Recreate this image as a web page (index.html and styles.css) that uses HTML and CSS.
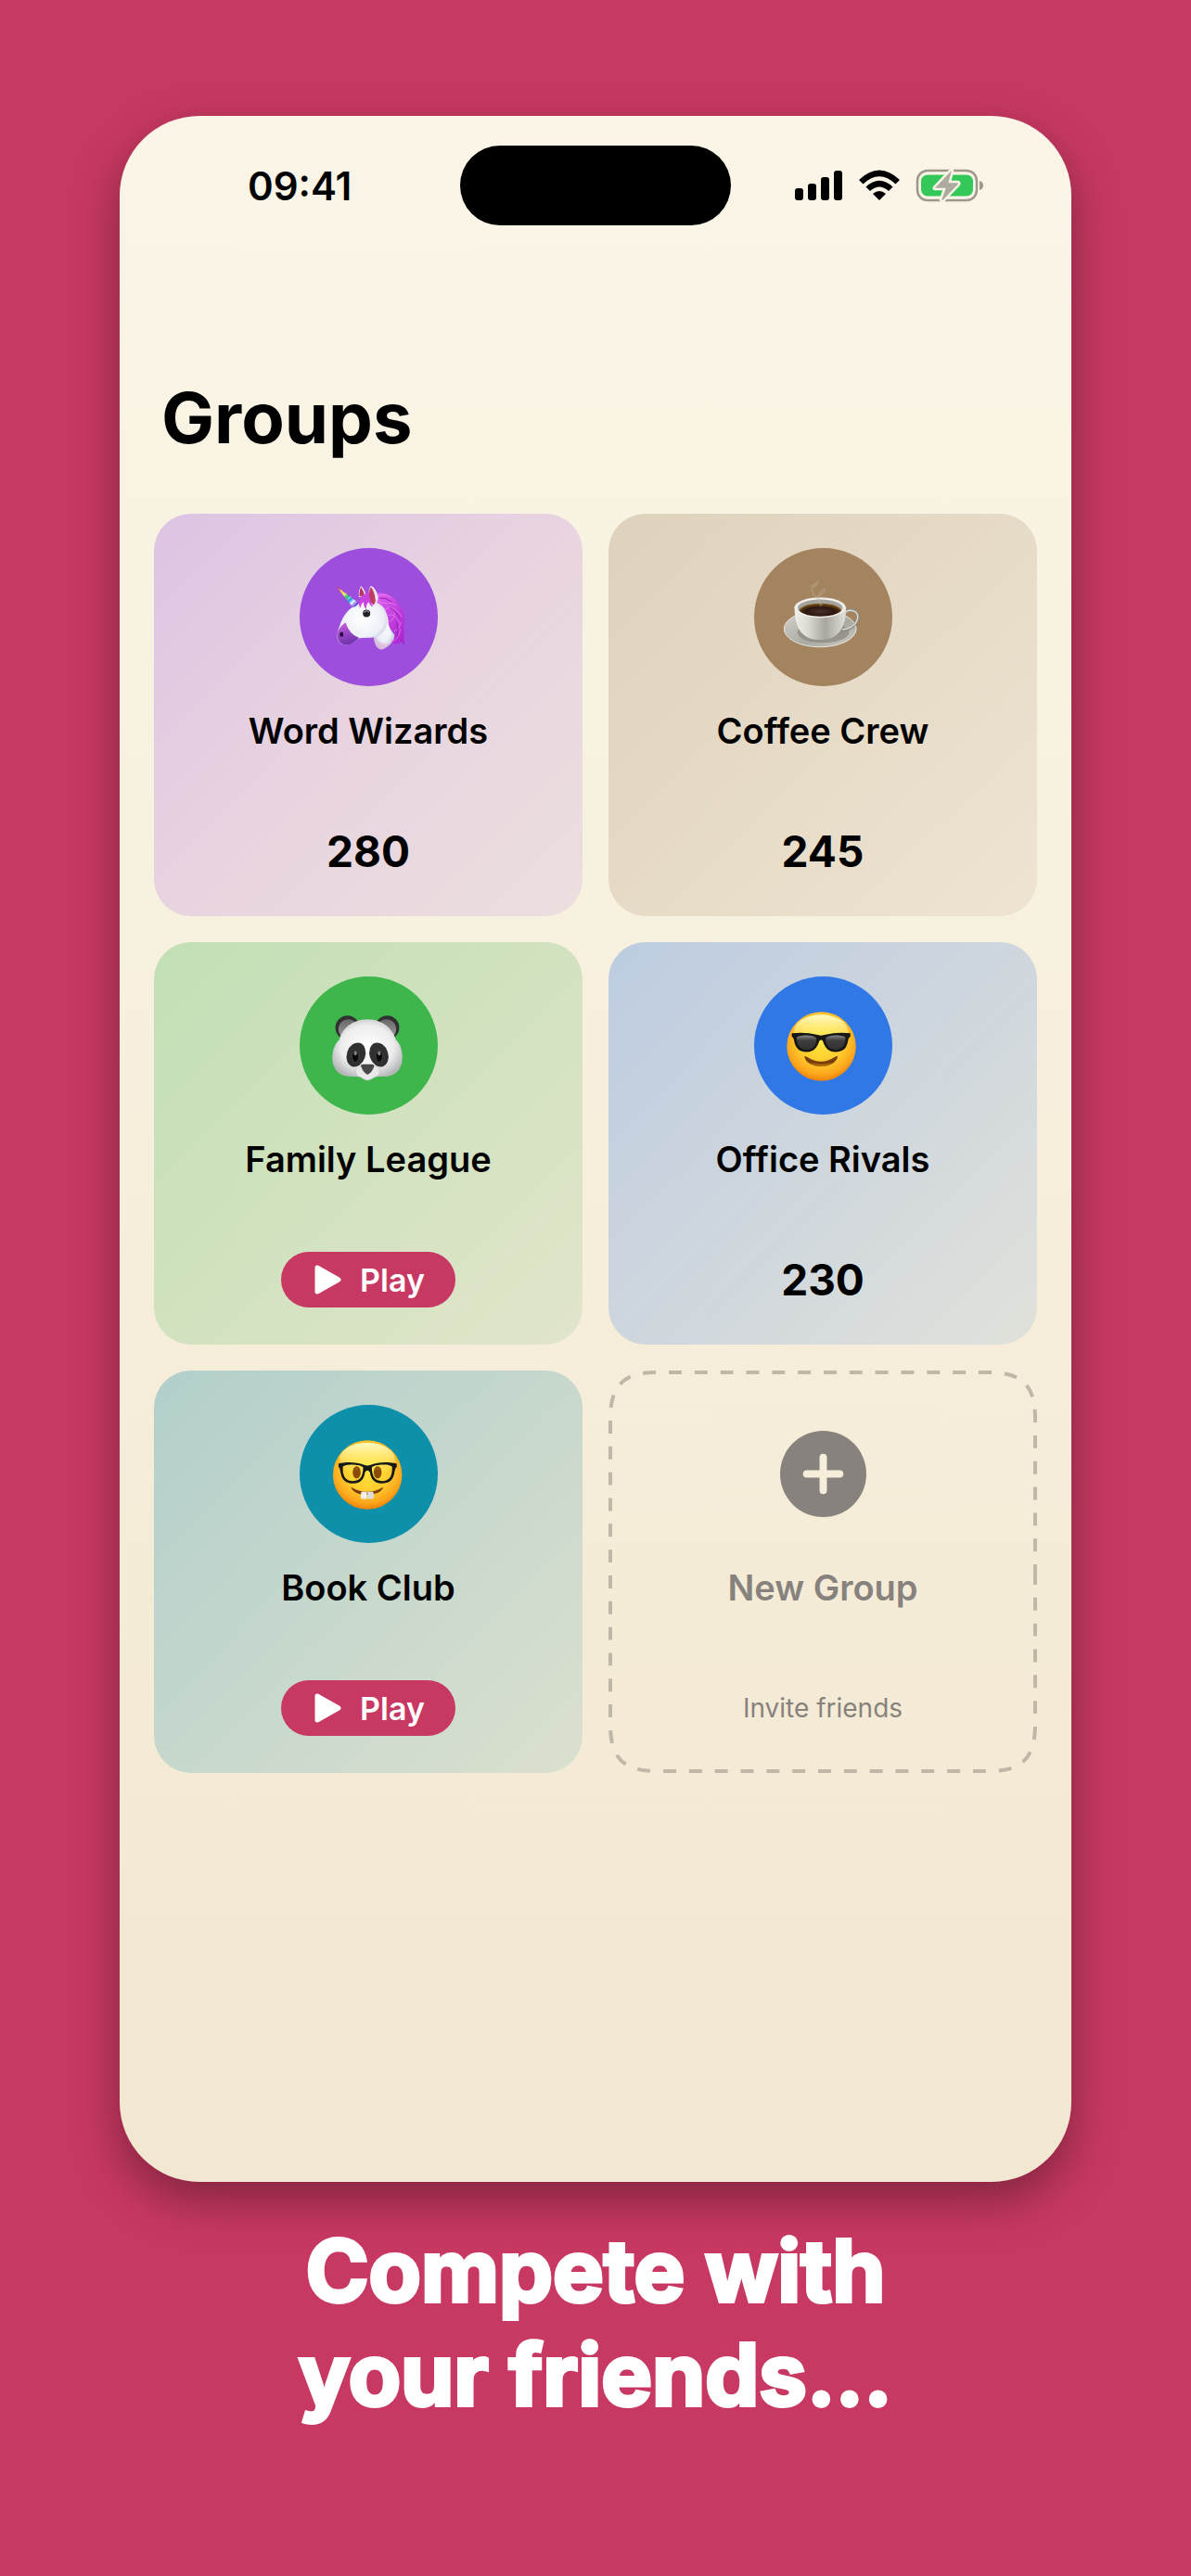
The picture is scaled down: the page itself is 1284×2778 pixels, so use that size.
FILE: index.html
```html
<!DOCTYPE html>
<html lang="en">
<head>
  <meta charset="UTF-8">
  <meta name="viewport" content="width=device-width, initial-scale=1.0">
  <title>Groups</title>
  <link rel="stylesheet" href="styles.css">
</head>
<body>
  <main class="phone">
    <div class="status-bar">
      <span class="time">09:41</span>
      <span class="island"></span>
      <div class="status-icons">
        <svg width="52" height="34" viewBox="0 0 52 34">
          <rect x="0" y="20" width="9" height="13" rx="3"/>
          <rect x="14" y="15" width="9" height="18" rx="3"/>
          <rect x="28" y="8" width="9" height="25" rx="3"/>
          <rect x="42" y="1" width="9" height="32" rx="3"/>
        </svg>
        <svg width="46" height="34" viewBox="0 0 46 34">
          <path d="M1 11 Q23 -10 45 11 L40.500 15.500 Q23 -1 5.500 15.500 Z"/>
          <path d="M8.500 18.500 Q23 5 37.500 18.500 L33 23 Q23 14 13 23 Z"/>
          <path d="M16 26 Q23 20 30 26 L23 33 Z"/>
        </svg>
        <svg width="74" height="36" viewBox="0 0 74 36">
          <rect x="2" y="2" width="64" height="32" rx="11" fill="none" stroke="#9d988c" stroke-width="2.500"/>
          <rect x="6" y="6.500" width="56" height="23" rx="7" fill="#34c759"/>
          <path d="M69 13 Q73 14 73 18 Q73 22 69 23 Z" fill="#9d988c"/>
          <path d="M38 1 L20 20 Q19 22 22 22 H31 L27 33 Q28 37 31 34 L47 17 Q48 14 45 14 H37 L40 3 Q40 0 38 1 Z" fill="#aeaa9f" stroke="#faf5e7" stroke-width="2.500"/>
        </svg>
      </div>
    </div>

    <h1 class="title">Groups</h1>

    <section class="groups">
      <article class="card purple">
        <div class="badge">
          <svg viewBox="38 32 448 448">
            <defs>
              <linearGradient id="horn" x1="160" y1="158" x2="222" y2="220" gradientUnits="userSpaceOnUse">
                <stop offset="0" stop-color="#e8282c"/>
                <stop offset=".2" stop-color="#ffb629"/>
                <stop offset=".35" stop-color="#f3f04a"/>
                <stop offset=".5" stop-color="#3ecf63"/>
                <stop offset=".68" stop-color="#2b9cf0"/>
                <stop offset=".8" stop-color="#d8efff"/>
                <stop offset="1" stop-color="#5a23cf"/>
              </linearGradient>
              <radialGradient id="horse" cx=".5" cy=".4" r=".65">
                <stop offset="0" stop-color="#ffffff"/>
                <stop offset=".65" stop-color="#eef0f8"/>
                <stop offset="1" stop-color="#b4b3d6"/>
              </radialGradient>
              <linearGradient id="mane" x1="0" y1="0" x2="1" y2="1">
                <stop offset="0" stop-color="#e067f2"/>
                <stop offset="1" stop-color="#aa1fce"/>
              </linearGradient>
              <linearGradient id="muzzle" x1="0" y1="0" x2=".3" y2="1">
                <stop offset="0" stop-color="#cf62e4"/>
                <stop offset="1" stop-color="#7233ae"/>
              </linearGradient>
            </defs>
            <path d="M230 191 Q228 166 237 155 Q249 164 254 188 Z" fill="#f1e5ef"/>
            <path d="M232 188 Q231 168 237 159 Q246 172 249 187 Z" fill="#b83567"/>
            <path d="M278 184 C308 168 345 186 358 214 C377 230 379 258 376 278 C379 303 373 323 379 345 Q371 342 369 335 Q352 350 329 336 C342 332 348 319 345 303 C329 294 321 270 320 250 L286 210 Z" fill="url(#mane)"/>
            <path d="M285 210 Q326 230 326 278 Q331 300 346 314 C345 332 333 347 316 356 C298 367 283 360 277 320 Z" fill="url(#horse)"/>
            <path d="M278 320 Q300 350 333 341 Q318 359 301 362 Q284 358 278 320 Z" fill="#e9b4d8" opacity=".55"/>
            <path d="M228 214 C264 196 300 205 315 232 C329 267 322 300 294 318 C271 326 249 322 231 325 C213 338 195 349 178 345 C160 339 157 320 161 304 C173 269 184 232 228 214 Z" fill="url(#horse)"/>
            <path d="M187 273 Q198 310 231 324 Q214 340 200 344 C177 350 158 338 161 306 Q167 287 187 273 Z" fill="url(#muzzle)"/>
            <ellipse cx="174" cy="312" rx="6" ry="8" fill="#250c40"/>
            <path d="M157 157 L229 210 Q221 224 210 224 Z" fill="url(#horn)"/>
            <path d="M171 172 l5 -3 M182 185 l8 -6 M193 199 l12 -9 M203 212 l16 -10" stroke="#fff" stroke-width="3" opacity=".65"/>
            <path d="M263 204 Q259 165 269 154 Q286 163 293 190 Q293 208 281 218 Z" fill="#eee3ee"/>
            <path d="M265 206 Q260 168 269 158 Q281 172 284 202 Q282 215 277 216 Z" fill="#bd3c63"/>
            <path d="M264 178 C236 178 224 204 234 227 Q239 211 246 206 Q244 222 254 231 Q253 214 262 207 Q266 220 277 222 Q263 204 264 178 Z" fill="#c844dd"/>
            <path d="M290 188 Q311 177 335 192 M292 204 C312 219 328 202 350 217 M316 230 C333 218 356 232 370 256 M323 251 Q346 238 363 278 M322 274 C336 271 346 260 344 241 M344 302 Q363 294 367 272 M332 335 C354 333 363 314 364 294" fill="none" stroke="#ed82f7" stroke-width="2"/>
            <path d="M296 194 Q318 192 338 207 M330 225 Q355 238 363 262 M352 270 Q360 295 353 319" fill="none" stroke="#9225b5" stroke-width="3"/>
            <circle cx="255" cy="244" r="12" fill="#222126"/>
            <path d="M247 241 Q255 232 263 240" fill="none" stroke="#8a8a8f" stroke-width="4"/>
          </svg>
        </div>
        <h2 class="name">Word Wizards</h2>
        <div class="footer"><span class="score">280</span></div>
      </article>

      <article class="card brown">
        <div class="badge">
          <svg viewBox="38 32 448 448">
            <defs>
              <linearGradient id="saucer" x1="0" y1="0" x2="1" y2="1">
                <stop offset="0" stop-color="#d6d5cd"/>
                <stop offset=".6" stop-color="#aaa9a1"/>
                <stop offset="1" stop-color="#d0cfc8"/>
              </linearGradient>
              <linearGradient id="cup" x1="0" y1="0" x2="1" y2="0">
                <stop offset="0" stop-color="#f0efea"/>
                <stop offset=".25" stop-color="#dcdbd3"/>
                <stop offset=".6" stop-color="#a9a69e"/>
                <stop offset="1" stop-color="#e1e0d9"/>
              </linearGradient>
              <radialGradient id="coffee" cx=".5" cy=".6" r=".5">
                <stop offset="0" stop-color="#4b3028"/>
                <stop offset=".7" stop-color="#2b1610"/>
                <stop offset="1" stop-color="#5b3814"/>
              </radialGradient>
            </defs>
            <ellipse cx="252" cy="294" rx="117" ry="59" fill="url(#saucer)" stroke="#e4e3dd" stroke-width="3"/>
            <ellipse cx="262" cy="306" rx="84" ry="33" fill="#77746d" opacity=".5"/>
            <path d="M331 246 C333 230 373 226 374 254 C374 282 344 301 321 299" fill="none" stroke="#8e8e89" stroke-width="9"/>
            <path d="M333 242 C342 229 375 232 374 257 C371 282 344 296 324 296" fill="none" stroke="#dddcd6" stroke-width="4"/>
            <path d="M169 222 C169 285 188 330 252 330 C316 330 337 283 336 222 Z" fill="url(#cup)"/>
            <ellipse cx="252" cy="225" rx="83" ry="33" fill="#efeee9"/>
            <ellipse cx="252" cy="226" rx="73" ry="27" fill="#a5a39b"/>
            <path d="M184 236 C194 207 309 206 321 236 Q302 254 252 254 Q203 254 184 236 Z" fill="url(#coffee)"/>
            <path d="M187 231 C210 208 294 207 318 231" fill="none" stroke="#755018" stroke-width="4"/>
            <path d="M253 220 C253 195 223 186 225 166 C228 153 243 157 243 145 M222 155 Q236 150 247 141 M258 216 C242 199 246 168 269 166 M238 190 Q257 186 267 172" fill="none" stroke="#c3b5a6" stroke-width="5" stroke-linecap="round" opacity=".35"/>
          </svg>
        </div>
        <h2 class="name">Coffee Crew</h2>
        <div class="footer"><span class="score">245</span></div>
      </article>

      <article class="card green">
        <div class="badge">
          <svg viewBox="38 39 448 448">
            <defs>
              <radialGradient id="panda" cx=".5" cy=".48" r=".58">
                <stop offset="0" stop-color="#ffffff"/>
                <stop offset=".65" stop-color="#ededee"/>
                <stop offset="1" stop-color="#b4b5b7"/>
              </radialGradient>
              <linearGradient id="ear" x1="0" y1="0" x2="0" y2="1">
                <stop offset="0" stop-color="#686868"/>
                <stop offset="1" stop-color="#a09f9f"/>
              </linearGradient>
            </defs>
            <circle cx="193" cy="205" r="39" fill="#313132"/>
            <circle cx="196" cy="210" r="32" fill="url(#ear)"/>
            <circle cx="322" cy="205" r="39" fill="#313132"/>
            <circle cx="319" cy="210" r="32" fill="url(#ear)"/>
            <path d="M258 178 C309 178 341 211 350 244 C366 259 371 282 371 304 C370 345 345 364 307 364 H209 C170 364 145 345 144 305 C144 282 150 260 167 244 C174 211 207 178 258 178 Z" fill="url(#panda)"/>
            <path d="M231 331 C216 335 216 356 230 364 C240 366 246 375 258 376 C270 375 277 366 287 364 C302 355 301 334 285 330 Z" fill="#e9e9ea" stroke="#c0c0c2" stroke-width="2"/>
            <ellipse cx="221" cy="293" rx="30" ry="40" transform="rotate(18 221 293)" fill="#303031"/>
            <ellipse cx="295" cy="293" rx="30" ry="40" transform="rotate(-18 295 293)" fill="#303031"/>
            <ellipse cx="219" cy="298" rx="11" ry="19" fill="#0a0a0b" stroke="#505052" stroke-width="2"/>
            <ellipse cx="296" cy="298" rx="11" ry="19" fill="#0a0a0b" stroke="#505052" stroke-width="2"/>
            <ellipse cx="219" cy="288" rx="5" ry="7" fill="#858588"/>
            <ellipse cx="296" cy="288" rx="5" ry="7" fill="#858588"/>
            <path d="M237 330 Q235 323 246 324 H270 Q282 323 279 332 Q273 350 258 358 Q243 350 237 330 Z" fill="#48484a"/>
          </svg>
        </div>
        <h2 class="name">Family League</h2>
        <div class="footer">
          <button class="play">
            <svg width="29" height="32" viewBox="0 0 29 32"><path d="M3 3 V29 L26 16 Z"/></svg>
            Play
          </button>
        </div>
      </article>

      <article class="card blue">
        <div class="badge">
          <svg viewBox="38 39 448 448">
            <defs>
              <radialGradient id="face" cx=".5" cy=".4" r=".6">
                <stop offset="0" stop-color="#ffe83f"/>
                <stop offset=".55" stop-color="#ffcd2e"/>
                <stop offset=".85" stop-color="#fba61c"/>
                <stop offset="1" stop-color="#ed8208"/>
              </radialGradient>
              <linearGradient id="shine" x1="0" y1="0" x2="0" y2="1">
                <stop offset="0" stop-color="#fffbc8"/>
                <stop offset="1" stop-color="#ffed55" stop-opacity="0"/>
              </linearGradient>
              <linearGradient id="lens" x1="0" y1="0" x2="0" y2="1">
                <stop offset="0" stop-color="#858585"/>
                <stop offset=".35" stop-color="#3e3e3e"/>
                <stop offset="1" stop-color="#303030"/>
              </linearGradient>
            </defs>
            <circle cx="256" cy="266" r="112" fill="url(#face)"/>
            <ellipse cx="255" cy="218" rx="88" ry="55" fill="url(#shine)"/>
            <path d="M160 223 Q205 218 240 228 Q255 233 270 228 Q306 218 350 223 V233 Q344 238 342 249 C338 276 322 284 302 284 C277 284 267 269 261 249 Q255 241 249 249 C243 269 233 284 208 284 C187 284 172 274 168 249 Q166 238 160 233 Z" fill="#161617"/>
            <path d="M176 238 C177 228 233 226 240 240 C241 260 229 277 210 277 C188 277 176 263 176 238 Z" fill="url(#lens)"/>
            <path d="M334 238 C333 228 277 226 270 240 C269 260 281 277 302 277 C322 277 334 263 334 238 Z" fill="url(#lens)"/>
            <path d="M201 298 Q203 296 209 300 Q255 330 300 300 Q306 296 309 298 C303 340 207 341 201 298 Z" fill="#79400b"/>
            <path d="M216 318 Q255 340 294 318 Q255 331 216 318 Z" fill="#c8740d"/>
          </svg>
        </div>
        <h2 class="name">Office Rivals</h2>
        <div class="footer"><span class="score">230</span></div>
      </article>

      <article class="card teal">
        <div class="badge">
          <svg viewBox="38 45 448 448">
            <circle cx="258" cy="272" r="112" fill="url(#face)"/>
            <ellipse cx="257" cy="222" rx="90" ry="54" fill="url(#shine)"/>
            <ellipse cx="223" cy="264" rx="13" ry="20" fill="#8b4c08"/>
            <ellipse cx="291" cy="264" rx="13" ry="20" fill="#8b4c08"/>
            <path d="M219 254 q4 -7 8 0 M287 254 q4 -7 8 0" fill="none" stroke="#bd7622" stroke-width="3"/>
            <path d="M204 311 C235 332 280 332 309 311 C302 344 214 347 204 311 Z" fill="#7a3e0a"/>
            <path d="M238 327 H256 V350 H242 Q235 350 236 342 Z" fill="#f1f0ed"/>
            <path d="M258 327 H277 L279 342 Q279 350 272 350 H258 Z" fill="#dddcda"/>
            <path fill-rule="evenodd" d="M164 236 C187 229 222 230 247 240 Q258 244 269 240 C295 229 330 230 353 236 V246 Q348 250 346 261 C342 291 328 300 304 300 C282 300 269 287 266 264 Q258 252 250 264 C247 287 235 300 212 300 C188 300 174 289 170 260 Q169 249 164 246 Z M178 247 C177 277 187 292 211 292 C233 292 243 279 244 249 C240 237 181 235 178 247 Z M272 249 C273 279 283 292 305 292 C329 292 339 277 338 247 C335 235 276 237 272 249 Z" fill="#161719"/>
          </svg>
        </div>
        <h2 class="name">Book Club</h2>
        <div class="footer">
          <button class="play">
            <svg width="29" height="32" viewBox="0 0 29 32"><path d="M3 3 V29 L26 16 Z"/></svg>
            Play
          </button>
        </div>
      </article>

      <button class="card new-group">
        <svg class="outline" viewBox="0 0 462 434" preserveAspectRatio="none">
          <path pathLength="1716" d="M460 217 V382 C460 418 446 432 410 432 H52 C16 432 2 418 2 382 V52 C2 16 16 2 52 2 H410 C446 2 460 16 460 52 Z"/>
        </svg>
        <span class="badge">
          <svg class="plus" width="93" height="93" viewBox="0 0 94 94">
            <circle cx="47" cy="47" r="47" fill="#87827d"/>
            <path d="M47 29 V65 M29 47 H65" stroke="#f6edda" stroke-width="8" stroke-linecap="round"/>
          </svg>
        </span>
        <span class="name">New Group</span>
        <span class="footer">Invite friends</span>
      </button>
    </section>
  </main>

  <p class="caption">Compete with<br>your friends...</p>
</body>
</html>
```
FILE: styles.css
```css
* {
  box-sizing: border-box;
}
body {
  margin: 0;
  min-height: 100vh;
  padding: 125px 129px 161px;
  display: flex;
  flex-direction: column;
  gap: 40px;
  background-color: #c73862;
  color: #000;
  font-family: Inter, "Liberation Sans", sans-serif;
}
.phone {
  flex: 1;
  padding: 32px 37px;
  border-radius: 86px;
  background: linear-gradient(#faf5e7, #f7f0de 45%, #f2e7d0);
  box-shadow: 0 20px 50px rgba(0, 0, 0, 0.35);
}

/* status bar */
.status-bar {
  display: grid;
  grid-template-columns: 1fr 292px 1fr;
  align-items: center;
}
.time {
  padding-left: 101px;
  font-size: 42px;
  font-weight: 600;
}
.island {
  height: 86px;
  border-radius: 43px;
  background: #000;
}
.status-icons {
  display: flex;
  align-items: center;
  gap: 16px;
  padding-left: 69px;
}

.title {
  margin: 161px 8px 58px;
  font-size: 76px;
  line-height: 92px;
  font-weight: 700;
}

/* group cards */
.groups {
  display: grid;
  grid-template-columns: 1fr 1fr;
  gap: 28px;
}
.card {
  display: flex;
  flex-direction: column;
  align-items: center;
  padding: 37px 20px 40px;
  border: none;
  border-radius: 40px;
}
.badge {
  display: flex;
  align-items: center;
  justify-content: center;
  width: 149px;
  height: 149px;
  border-radius: 50%;
}
.name {
  margin: 24px 0 76px;
  font-size: 38px;
  line-height: 48px;
  font-weight: 600;
}
.footer {
  display: flex;
  align-items: center;
  height: 60px;
}
.score {
  font-size: 46px;
  font-weight: 700;
}
.play {
  display: flex;
  align-items: center;
  gap: 20px;
  height: 60px;
  padding: 0 33px 0 36px;
  border: none;
  border-radius: 30px;
  background: #c73862;
  color: #fff;
  font-family: inherit;
  font-size: 34px;
  font-weight: 600;
  cursor: pointer;
}
.play path {
  fill: #fff;
  stroke: #fff;
  stroke-width: 5;
  stroke-linejoin: round;
}

.purple { background: linear-gradient(135deg, #dcc4e3, #e8d4e0 50%, #ecdfde); }
.purple .badge { background: #9d4edd; }
.brown { background: linear-gradient(135deg, #dfd2bd, #eee4d1); }
.brown .badge { background: #a3845e; }
.green { background: linear-gradient(135deg, #c2dfb5, #e1e5ca); }
.green .badge { background: #3fb64c; }
.blue { background: linear-gradient(135deg, #bdcce1, #e0e1da); }
.blue .badge { background: #3078e6; }
.teal { background: linear-gradient(135deg, #b2cfcb, #dbe0ce); }
.teal .badge { background: #0f90aa; }

.new-group {
  position: relative;
  background: none;
  color: #87827d;
  font-family: inherit;
  font-size: 28px;
  cursor: pointer;
}
.outline {
  position: absolute;
  inset: 0;
  width: 100%;
  height: 100%;
}
.outline path {
  fill: none;
  stroke: #bfb8a9;
  stroke-width: 4;
  stroke-dasharray: 14 14;
}

.caption {
  margin: 0;
  text-align: center;
  color: #fff;
  font-size: 92px;
  line-height: 112px;
  font-weight: 700;
  -webkit-text-stroke: 4px #fff;
  stroke-linejoin: round;
}
```
